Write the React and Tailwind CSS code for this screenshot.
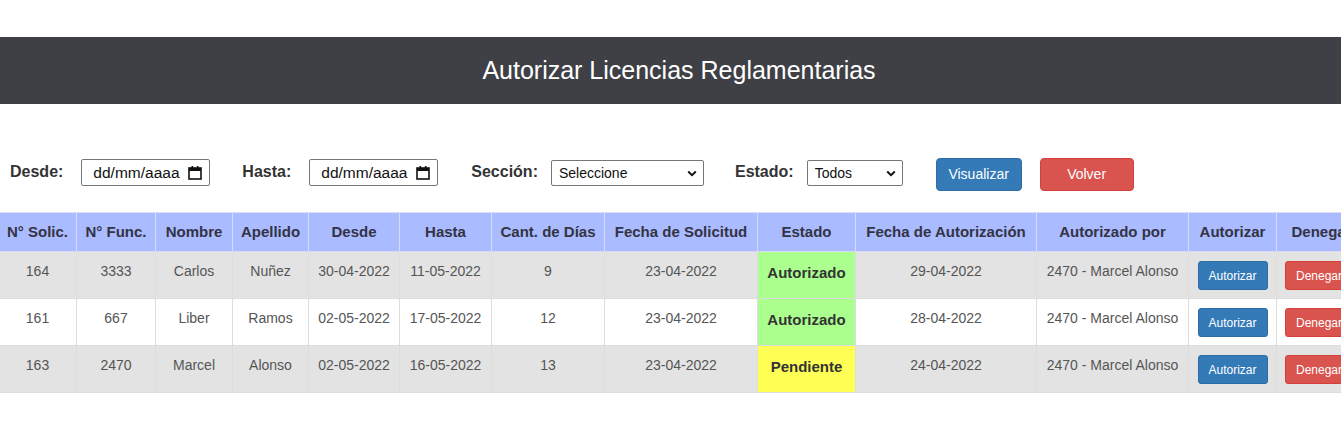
import React from 'react';

const cols = [
  { key: 'sol', label: 'N° Solic.', w: 78 },
  { key: 'func', label: 'N° Func.', w: 79 },
  { key: 'nombre', label: 'Nombre', w: 77 },
  { key: 'apellido', label: 'Apellido', w: 76 },
  { key: 'desde', label: 'Desde', w: 91 },
  { key: 'hasta', label: 'Hasta', w: 92 },
  { key: 'dias', label: 'Cant. de Días', w: 113 },
  { key: 'fsol', label: 'Fecha de Solicitud', w: 153 },
  { key: 'estado', label: 'Estado', w: 98 },
  { key: 'faut', label: 'Fecha de Autorización', w: 181 },
  { key: 'por', label: 'Autorizado por', w: 152 },
  { key: 'aut', label: 'Autorizar', w: 88 },
  { key: 'den', label: 'Denegar', w: 90 },
];

const rows = [
  { sol: '164', func: '3333', nombre: 'Carlos', apellido: 'Nuñez', desde: '30-04-2022', hasta: '11-05-2022', dias: '9', fsol: '23-04-2022', estado: 'Autorizado', faut: '29-04-2022', por: '2470 - Marcel Alonso' },
  { sol: '161', func: '667', nombre: 'Liber', apellido: 'Ramos', desde: '02-05-2022', hasta: '17-05-2022', dias: '12', fsol: '23-04-2022', estado: 'Autorizado', faut: '28-04-2022', por: '2470 - Marcel Alonso' },
  { sol: '163', func: '2470', nombre: 'Marcel', apellido: 'Alonso', desde: '02-05-2022', hasta: '16-05-2022', dias: '13', fsol: '23-04-2022', estado: 'Pendiente', faut: '24-04-2022', por: '2470 - Marcel Alonso' },
];

function CalendarIcon() {
  return (
    <svg width="14" height="15" viewBox="0 0 14 15" className="shrink-0">
      <rect x="1" y="3" width="12" height="11" fill="none" stroke="#111" strokeWidth="1.6" />
      <rect x="1" y="3" width="12" height="3" fill="#111" />
      <rect x="3.5" y="1" width="1.6" height="3" fill="#111" />
      <rect x="8.9" y="1" width="1.6" height="3" fill="#111" />
    </svg>
  );
}

function Chevron() {
  return (
    <svg width="10" height="7" viewBox="0 0 10 7" className="shrink-0">
      <path d="M1.2 1.5 L5 5.2 L8.8 1.5" fill="none" stroke="#111" strokeWidth="1.9" />
    </svg>
  );
}

function DateField() {
  return (
    <div className="mt-[1px] h-[27px] w-[129px] flex items-center justify-between pl-[11px] pr-[7px] bg-white border border-[#767676] rounded-[2px] text-[15.5px] text-[#111]">
      <span>dd/mm/aaaa</span>
      <CalendarIcon />
    </div>
  );
}

function SelectField({ value, width }) {
  return (
    <div className={`mt-[2px] h-[26px] ${width} flex items-center justify-between pl-[7px] pr-[6px] bg-white border border-[#767676] rounded-[2px] text-[14px] text-[#111]`}>
      <span>{value}</span>
      <Chevron />
    </div>
  );
}

function Label({ children, className }) {
  return <span className={`mt-[4px] leading-[20px] text-[16px] font-bold text-[#333] ${className}`}>{children}</span>;
}

export default function App() {
  return (
    <div className="w-[1341px] h-[422px] overflow-hidden bg-white font-['Liberation_Sans',Arial,sans-serif]">
      <div className="h-[37px]" />
      <div className="h-[67px] pl-[17px] bg-[#3f3f46] flex items-center justify-center">
        <h1 className="text-[25px] text-white leading-none">Autorizar Licencias Reglamentarias</h1>
      </div>

      <div className="pt-[54px] pl-[10px] flex items-start h-[87px]">
        <Label>Desde:</Label>
        <div className="ml-[18px]"><DateField /></div>
        <Label className="ml-[32px]">Hasta:</Label>
        <div className="ml-[18px]"><DateField /></div>
        <Label className="ml-[33px]">Sección:</Label>
        <div className="ml-[13px]"><SelectField value="Seleccione" width="w-[153px]" /></div>
        <Label className="ml-[31px]">Estado:</Label>
        <div className="ml-[13px]"><SelectField value="Todos" width="w-[96px]" /></div>
        <button className="ml-[33px] h-[33px] w-[86px] bg-[#337ab7] border border-[#2e6da4] rounded-[4px] text-white text-[14px]">Visualizar</button>
        <button className="ml-[18px] h-[33px] w-[94px] bg-[#d9534f] border border-[#d43f3a] rounded-[4px] text-white text-[14px]">Volver</button>
      </div>

      <div className="mt-[21px] ml-[-2px]">
        <table className="table-fixed border-collapse w-[1368px]">
          <colgroup>
            {cols.map((c) => (
              <col key={c.key} style={{ width: c.w }} />
            ))}
          </colgroup>
          <thead>
            <tr className="bg-[#aabbff]">
              {cols.map((c) => (
                <th key={c.key} className="h-[39px] border border-[#d9dcef] text-[15px] font-bold text-[#333344] text-center whitespace-nowrap px-1">
                  {c.label}
                </th>
              ))}
            </tr>
          </thead>
          <tbody>
            {rows.map((r, i) => (
              <tr key={r.sol} className={i % 2 === 0 ? 'bg-[#e3e3e3]' : 'bg-white'}>
                {cols.slice(0, 11).map((c) => {
                  if (c.key === 'estado') {
                    const bg = r.estado === 'Autorizado' ? 'bg-[#aaff8e]' : 'bg-[#ffff55]';
                    return (
                      <td key={c.key} className={`h-[47px] align-top pt-[11px] border border-[#dddddd] text-center text-[15px] font-bold text-[#333] leading-[20px] ${bg}`}>
                        {r.estado}
                      </td>
                    );
                  }
                  return (
                    <td key={c.key} className="h-[47px] align-top pt-[9px] border border-[#dddddd] text-center text-[14px] text-[#555] leading-[20px] whitespace-nowrap">
                      {r[c.key]}
                    </td>
                  );
                })}
                <td className="h-[47px] align-top pt-[9px] border border-[#dddddd] text-center">
                  <button className="h-[29px] w-[70px] bg-[#337ab7] border border-[#2e6da4] rounded-[3px] text-white text-[12px]">Autorizar</button>
                </td>
                <td className="h-[47px] align-top pt-[9px] border border-[#dddddd] text-left pl-[8px]">
                  <button className="h-[29px] w-[70px] pl-[10px] text-left bg-[#d9534f] border border-[#d43f3a] rounded-[3px] text-white text-[12px]">Denegar</button>
                </td>
              </tr>
            ))}
          </tbody>
        </table>
      </div>
    </div>
  );
}
